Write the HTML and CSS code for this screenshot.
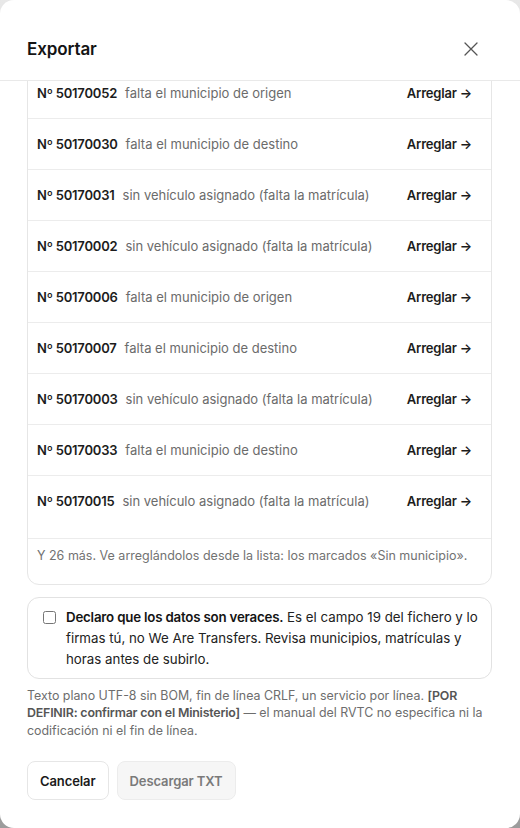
FILE: index.html
```html
<!DOCTYPE html>
<html lang="es">
<head>
<meta charset="utf-8">
<title>Exportar</title>
<link rel="stylesheet" href="styles.css">
</head>
<body>
<div class="modal">
  <header class="modal-head">
    <h2 class="modal-title">Exportar</h2>
    <button class="close" aria-label="Cerrar">
      <svg width="16" height="16" viewBox="0 0 16 16" fill="none" stroke="#555" stroke-width="1.3" stroke-linecap="round"><path d="M2 2L14 14M14 2L2 14"/></svg>
    </button>
  </header>
  <div class="modal-body">
    <div class="content">
      <section class="issues">
        <div class="issues-title">35 servicios no se pueden exportar todavía</div>
        <ul class="rows">
          <li class="row"><span class="num">Nº 50170041</span><span class="desc">falta el municipio de origen</span><a class="fix">Arreglar →</a></li>
          <li class="row"><span class="num">Nº 50170052</span><span class="desc">falta el municipio de origen</span><a class="fix">Arreglar →</a></li>
          <li class="row"><span class="num">Nº 50170030</span><span class="desc">falta el municipio de destino</span><a class="fix">Arreglar →</a></li>
          <li class="row"><span class="num">Nº 50170031</span><span class="desc">sin vehículo asignado (falta la matrícula)</span><a class="fix">Arreglar →</a></li>
          <li class="row"><span class="num">Nº 50170002</span><span class="desc">sin vehículo asignado (falta la matrícula)</span><a class="fix">Arreglar →</a></li>
          <li class="row"><span class="num">Nº 50170006</span><span class="desc">falta el municipio de origen</span><a class="fix">Arreglar →</a></li>
          <li class="row"><span class="num">Nº 50170007</span><span class="desc">falta el municipio de destino</span><a class="fix">Arreglar →</a></li>
          <li class="row"><span class="num">Nº 50170003</span><span class="desc">sin vehículo asignado (falta la matrícula)</span><a class="fix">Arreglar →</a></li>
          <li class="row"><span class="num">Nº 50170033</span><span class="desc">falta el municipio de destino</span><a class="fix">Arreglar →</a></li>
          <li class="row"><span class="num">Nº 50170015</span><span class="desc">sin vehículo asignado (falta la matrícula)</span><a class="fix">Arreglar →</a></li>
        </ul>
        <p class="more">Y 26 más. Ve arreglándolos desde la lista: los marcados «Sin municipio».</p>
      </section>
      <label class="declare">
        <input type="checkbox" class="check">
        <span class="declare-text"><strong>Declaro que los datos son veraces.</strong> Es el campo 19 del fichero y lo firmas tú, no We Are Transfers. Revisa municipios, matrículas y horas antes de subirlo.</span>
      </label>
      <p class="info">Texto plano UTF-8 sin BOM, fin de línea CRLF, un servicio por línea. <strong>[POR DEFINIR: confirmar con el Ministerio]</strong> — el manual del RVTC no especifica ni la codificación ni el fin de línea.</p>
      <div class="actions">
        <button class="btn btn-cancel">Cancelar</button>
        <button class="btn btn-download" disabled>Descargar TXT</button>
      </div>
    </div>
  </div>
</div>
</body>
</html>
```
FILE: styles.css
```css
* { box-sizing: border-box; }
html, body { height: 100%; }
body {
  margin: 0;
  font-family: Inter, "Noto Sans", "Liberation Sans", sans-serif;
  background: linear-gradient(#e8e8e8, #9c9c9c);
  color: #1a1a1a;
  overflow: hidden;
}
.modal {
  height: 100vh;
  width: 100%;
  background: #fff;
  border-radius: 14px;
  display: flex;
  flex-direction: column;
  overflow: hidden;
}
.modal-head {
  height: 81px;
  flex-shrink: 0;
  border-bottom: 1px solid #e9e9e9;
  display: flex;
  align-items: center;
  justify-content: space-between;
  padding: 17px 41px 0 27px;
}
.modal-title {
  margin: 0;
  font-size: 17px;
  font-weight: 600;
  letter-spacing: -0.1px;
  color: #141414;
}
.close {
  border: 0;
  background: none;
  padding: 0;
  width: 16px;
  height: 16px;
  display: flex;
  cursor: pointer;
}
.modal-body {
  flex: 1;
  min-height: 0;
  overflow: hidden;
  display: flex;
  flex-direction: column;
  justify-content: flex-end;
}
.content {
  flex-shrink: 0;
  padding: 0 28px 28px 27px;
}
.issues {
  border: 1px solid #e6e6e6;
  border-radius: 12px;
}
.issues-title {
  padding: 12px 10px;
  font-size: 13px;
  font-weight: 600;
  border-bottom: 1px solid #ececec;
}
.rows {
  list-style: none;
  margin: 0;
  padding: 0 0 12px;
}
.row {
  height: 51px;
  display: flex;
  align-items: center;
  padding: 0 19px 0 9px;
  font-size: 13px;
}
.row + .row { border-top: 1px solid #ececec; }
.num {
  font-weight: 600;
  letter-spacing: -0.2px;
  color: #1c1c1c;
  margin-right: 8px;
  white-space: nowrap;
}
.desc {
  color: #6b6b6b;
  flex: 1;
  white-space: nowrap;
}
.fix {
  font-weight: 600;
  letter-spacing: -0.2px;
  color: #1c1c1c;
  white-space: nowrap;
}
.more {
  margin: 0;
  border-top: 1px solid #ececec;
  padding: 8px 9px 20px;
  font-size: 12.5px;
  line-height: 17px;
  color: #727272;
}
.declare {
  margin-top: 12px;
  border: 1px solid #e2e2e2;
  border-radius: 12px;
  padding: 9px 8px 8px 15px;
  display: flex;
  align-items: flex-start;
  gap: 10px;
}
.check {
  margin: 4px 0 0;
  width: 13px;
  height: 13px;
  flex-shrink: 0;
}
.declare-text {
  font-size: 13.3px;
  line-height: 21px;
  color: #222;
}
.declare-text strong { color: #141414; font-weight: 600; letter-spacing: -0.2px; }
.info {
  margin: 8px 0 22px;
  font-size: 12.4px;
  line-height: 17.5px;
  color: #6d6d6d;
}
.info strong { color: #555; font-weight: 600; letter-spacing: -0.2px; }
.actions {
  display: flex;
  gap: 8px;
}
.btn {
  height: 39px;
  padding: 0 12px;
  border-radius: 8px;
  font-family: inherit;
  font-size: 13px;
  font-weight: 600;
  letter-spacing: -0.1px;
}
.btn-cancel {
  background: #fff;
  border: 1px solid #e6e6e6;
  color: #1a1a1a;
}
.btn-download {
  background: #f6f6f6;
  border: 1px solid #ececec;
  color: #7a7a7a;
}
```
